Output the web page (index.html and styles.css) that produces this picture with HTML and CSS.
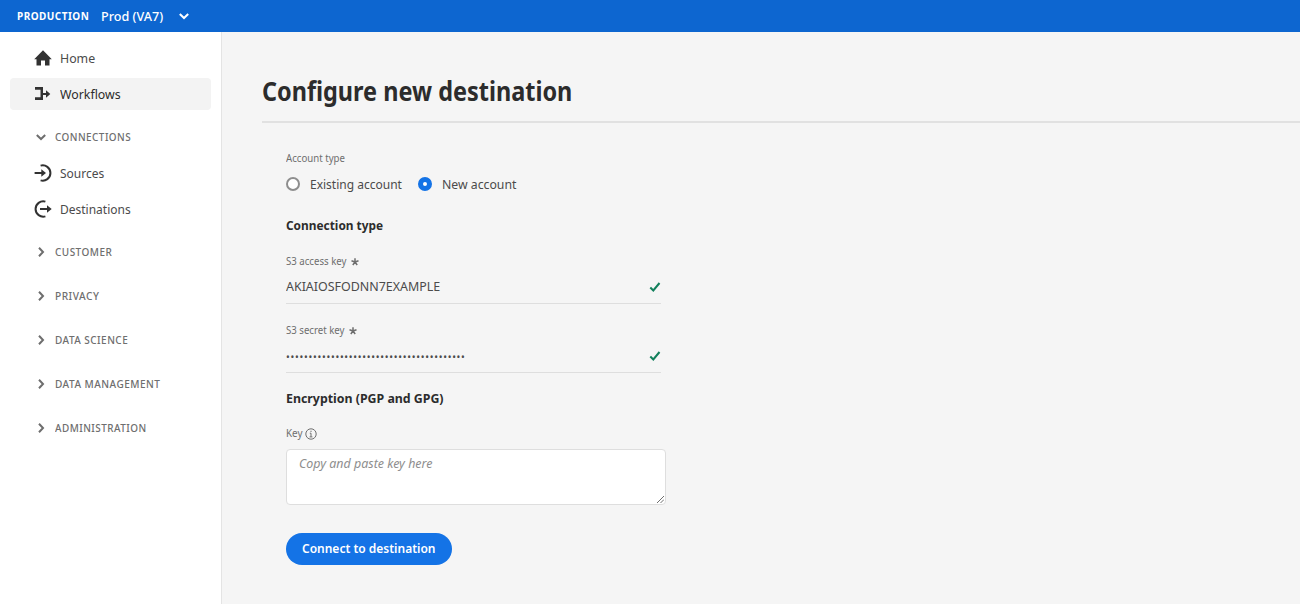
FILE: index.html
```
<!DOCTYPE html>
<html lang="en">
<head>
<meta charset="utf-8">
<title>Configure new destination</title>
<link rel="stylesheet" href="styles.css">
</head>
<body>
<header class="topbar">
  <span class="env t w95">PRODUCTION</span>
  <span class="sandbox t w97">Prod (VA7)</span>
  <svg class="caret" viewBox="0 0 10 10"><path d="M.8 3l4.200 4 4.200-4"/></svg>
</header>
<div class="shell">
  <nav class="sidebar">
    <a class="item"><svg class="icon" viewBox="0 0 18 18"><path d="M9 1.300L.2 10.200h2.300V16.500H7v-5h4v5h4.500v-6.300h2.300z"/></svg><span class="t w95">Home</span></a>
    <a class="item active"><svg class="icon" viewBox="0 0 18 18"><path d="M1 2h8v6h3V5.200L16.300 9 12 12.800V10H9v5H1v-2.700h5.500V4.700H1z"/></svg><span class="t w95">Workflows</span></a>
    <div class="group open"><svg class="caret" viewBox="0 0 10 10"><path d="M.8 3l4.200 4 4.200-4"/></svg><span class="t w94">CONNECTIONS</span></div>
    <a class="item"><svg class="icon line" viewBox="0 0 18 18"><path d="M6 1.600A7.700 7.700 0 1 1 6 16.400M0 9h8" transform="translate(.6 0)"/><path class="fill" d="M7.300 5.300L12 9l-4.700 3.700z"/></svg><span class="t w92">Sources</span></a>
    <a class="item"><svg class="icon line" viewBox="0 0 18 18"><path d="M11.400 1.600a7.700 7.700 0 1 0 0 14.800M6 9h8"/><path class="fill" d="M13 5.300L17.700 9 13 12.700z"/></svg><span class="t w92">Destinations</span></a>
    <div class="group"><svg class="caret" viewBox="0 0 10 10"><path d="M3 .8l4 4.200-4 4.200"/></svg><span class="t w95">CUSTOMER</span></div>
    <div class="group"><svg class="caret" viewBox="0 0 10 10"><path d="M3 .8l4 4.200-4 4.200"/></svg><span class="t w97">PRIVACY</span></div>
    <div class="group"><svg class="caret" viewBox="0 0 10 10"><path d="M3 .8l4 4.200-4 4.200"/></svg><span class="t w95">DATA SCIENCE</span></div>
    <div class="group"><svg class="caret" viewBox="0 0 10 10"><path d="M3 .8l4 4.200-4 4.200"/></svg><span class="t w96">DATA MANAGEMENT</span></div>
    <div class="group"><svg class="caret" viewBox="0 0 10 10"><path d="M3 .8l4 4.200-4 4.200"/></svg><span class="t w94">ADMINISTRATION</span></div>
  </nav>
  <main class="content">
    <h1 class="title"><span class="t w90">Configure new destination</span></h1>
    <form class="form">
      <div class="label account-label"><span class="t w90">Account type</span></div>
      <div class="radios">
        <label class="radio existing"><i class="dot"></i><span class="t w92">Existing account</span></label>
        <label class="radio"><i class="dot on"></i><span class="t w94">New account</span></label>
      </div>
      <h2 class="heading"><span class="t w91">Connection type</span></h2>
      <div class="field">
        <div class="label"><span class="t w90 access">S3 access key</span><svg class="star" viewBox="0 0 8 8"><path d="M4 4V.3M4 4l3.500-1.200M4 4l2.200 3M4 4L1.800 7M4 4L.5 2.800"/></svg></div>
        <div class="value"><span class="t w96">AKIAIOSFODNN7EXAMPLE</span><svg class="check" viewBox="0 0 12 10"><path d="M1.300 5.500l3 3L10.500 1"/></svg></div>
      </div>
      <div class="field">
        <div class="label"><span class="t w90 secret">S3 secret key</span><svg class="star" viewBox="0 0 8 8"><path d="M4 4V.3M4 4l3.500-1.200M4 4l2.200 3M4 4L1.800 7M4 4L.5 2.800"/></svg></div>
        <div class="value"><span class="password">••••••••••••••••••••••••••••••••••••••••</span><svg class="check" viewBox="0 0 12 10"><path d="M1.300 5.500l3 3L10.500 1"/></svg></div>
      </div>
      <h2 class="heading encryption"><span class="t w95">Encryption (PGP and GPG)</span></h2>
      <div class="label key-label"><span class="t w92 key">Key</span><svg class="info" viewBox="0 0 12 12"><circle cx="6" cy="6" r="5.200"/><path d="M4.800 5.200H6v3.600M4.600 8.900h2.800M6 2.700v1.300"/></svg></div>
      <div class="textarea"><span class="t w96">Copy and paste key here</span><svg class="grip" viewBox="0 0 8 8"><path d="M0 8l8-8M4 8l4-4"/></svg></div>
      <button class="submit" type="button"><span class="t w92">Connect to destination</span></button>
    </form>
  </main>
</div>
</body>
</html>
```
FILE: styles.css
```
* { box-sizing: border-box; }
body { margin: 0; height: 604px; overflow: hidden; background: #f5f5f5; color: #4b4b4b; font: 13px/20px "Noto Sans", sans-serif; }
/* Condensed text widths */
.t { display: inline-block; flex: none; transform-origin: left center; white-space: nowrap; }
.w90 { transform: scaleX(.902); }
.w91 { transform: scaleX(.913); }
.w92 { transform: scaleX(.923); }
.w94 { transform: scaleX(.943); }
.w95 { transform: scaleX(.95); }
.w96 { transform: scaleX(.957); }
.w97 { transform: scaleX(.97); }
svg { display: block; flex: none; fill: none; stroke: currentColor; }
.topbar { height: 32px; background: #0d66d0; color: #fff; display: flex; align-items: center; padding-left: 17px; }
.env { font-size: 10.5px; font-weight: 700; letter-spacing: .5px; width: 84px; }
.sandbox { width: 78px; font-weight: 500; }
.caret { width: 10px; height: 10px; stroke-width: 2; }
.shell { display: flex; height: 572px; }
.sidebar { width: 222px; background: #fff; border-right: 1px solid #e4e4e4; padding: 10px 10px 0; }
.item { display: flex; align-items: center; height: 32px; padding-left: 24px; gap: 8px; margin-bottom: 4px; border-radius: 4px; }
.active { background: #f3f3f3; color: #2c2c2c; }
.icon { width: 18px; height: 18px; fill: #323232; stroke: none; }
.line { fill: none; stroke: #323232; stroke-width: 2; }
.fill { fill: #323232; stroke: none; }
.group { display: flex; align-items: center; height: 32px; gap: 9px; padding-left: 26px; margin: 12px 0; color: #6e6e6e; font-size: 10.5px; font-weight: 500; letter-spacing: .5px; }
.open { margin: 11px 0 4px; }
.item + .group { margin-top: 11px; }
.content { flex: 1; padding-left: 40px; }
.title { margin: 0; height: 91px; padding-top: 39px; border-bottom: 2px solid #e1e1e1; font-size: 26px; line-height: 40px; color: #2c2c2c; }
.form { padding: 25px 0 0 24px; width: 404px; }
.label { display: flex; align-items: center; height: 20px; font-size: 10.7px; color: #6e6e6e; }
.radios { display: flex; margin-top: 6px; }
.radio { display: flex; align-items: center; gap: 10px; }
.existing { width: 132px; }
.dot { width: 14px; height: 14px; border: 2px solid #8e8e8e; border-radius: 50%; background: #fff; }
.on { border: 5px solid #1473e6; }
.heading { margin: 21px 0 16px; font-size: 13px; line-height: 20px; color: #2c2c2c; }
.field { width: 375px; height: 53px; border-bottom: 1px solid #dedede; margin-bottom: 16px; }
.encryption { margin: -1px 0 15px; }
.value { display: flex; align-items: center; justify-content: space-between; height: 30px; }
.access { width: 64.500px; }
.secret { width: 62.500px; }
.star { width: 8px; height: 8px; stroke-width: 1.5; margin-top: 1px; }
.check { width: 12px; height: 10px; margin-top: 2px; stroke: #12805c; stroke-width: 2; }
.key { width: 19px; }
.info { width: 12px; height: 12px; margin-top: 1px; }
.password { letter-spacing: .73px; font-size: 10px; line-height: 12px; padding-top: 3px; }
.textarea { position: relative; width: 380px; height: 56px; background: #fff; border: 1px solid #dedede; border-radius: 4px; padding: 3px 12px; font-style: italic; color: #8e8e8e; margin-top: 6px; }
.grip { position: absolute; right: 1px; bottom: 1px; width: 7px; height: 7px; color: #5a5a5a; }
.submit { display: block; margin-top: 28px; height: 32px; width: 166px; padding: 0 16px 2px; border: 0; border-radius: 16px; background: #1473e6; color: #fff; font: 600 13px/20px "Noto Sans", sans-serif; text-align: left; }
```
